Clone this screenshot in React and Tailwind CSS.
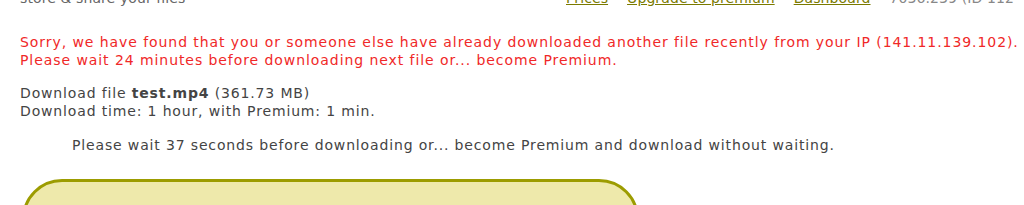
import React from 'react';

export default function App() {
  return (
    <div className="w-[1024px] h-[205px] overflow-hidden bg-white text-[14px] leading-[18px] tracking-[0.85px] text-[#444]" style={{ fontFamily: '"DejaVu Sans", Verdana, sans-serif' }}>
      <div className="flex items-center h-[18px] -mt-[11px] pl-5 whitespace-nowrap tracking-[0.1px]">
        <span className="w-[546px] shrink-0 text-[#666]">store &amp; share your files</span>
        <div className="flex items-center gap-[19px]">
          <a className="text-[#7a7a00] underline">Prices</a>
          <a className="text-[#7a7a00] underline">Upgrade to premium</a>
          <a className="text-[#7a7a00] underline">Dashboard</a>
          <span className="text-[#888]">7036.239 (ID 112</span>
        </div>
      </div>

      <div className="px-5 mt-[26px] text-[#f02828] whitespace-nowrap tracking-[0.93px]">
        <p>Sorry, we have found that you or someone else have already downloaded another file recently from your IP (141.11.139.102).</p>
        <p>Please wait 24 minutes before downloading next file or... become Premium.</p>
      </div>

      <div className="px-5 mt-[15px]">
        <p>Download file <b>test.mp4</b> (361.73 MB)</p>
        <p>Download time: 1 hour, with Premium: 1 min.</p>
      </div>

      <p className="pl-[72px] mt-[16px] whitespace-nowrap">Please wait 37 seconds before downloading or... become Premium and download without waiting.</p>

      <div className="ml-[22px] mt-[25px] w-[617px] h-[80px] rounded-[42px] border-[3px] border-[#9c9c00] bg-[#eee9ab]" />
    </div>
  );
}
